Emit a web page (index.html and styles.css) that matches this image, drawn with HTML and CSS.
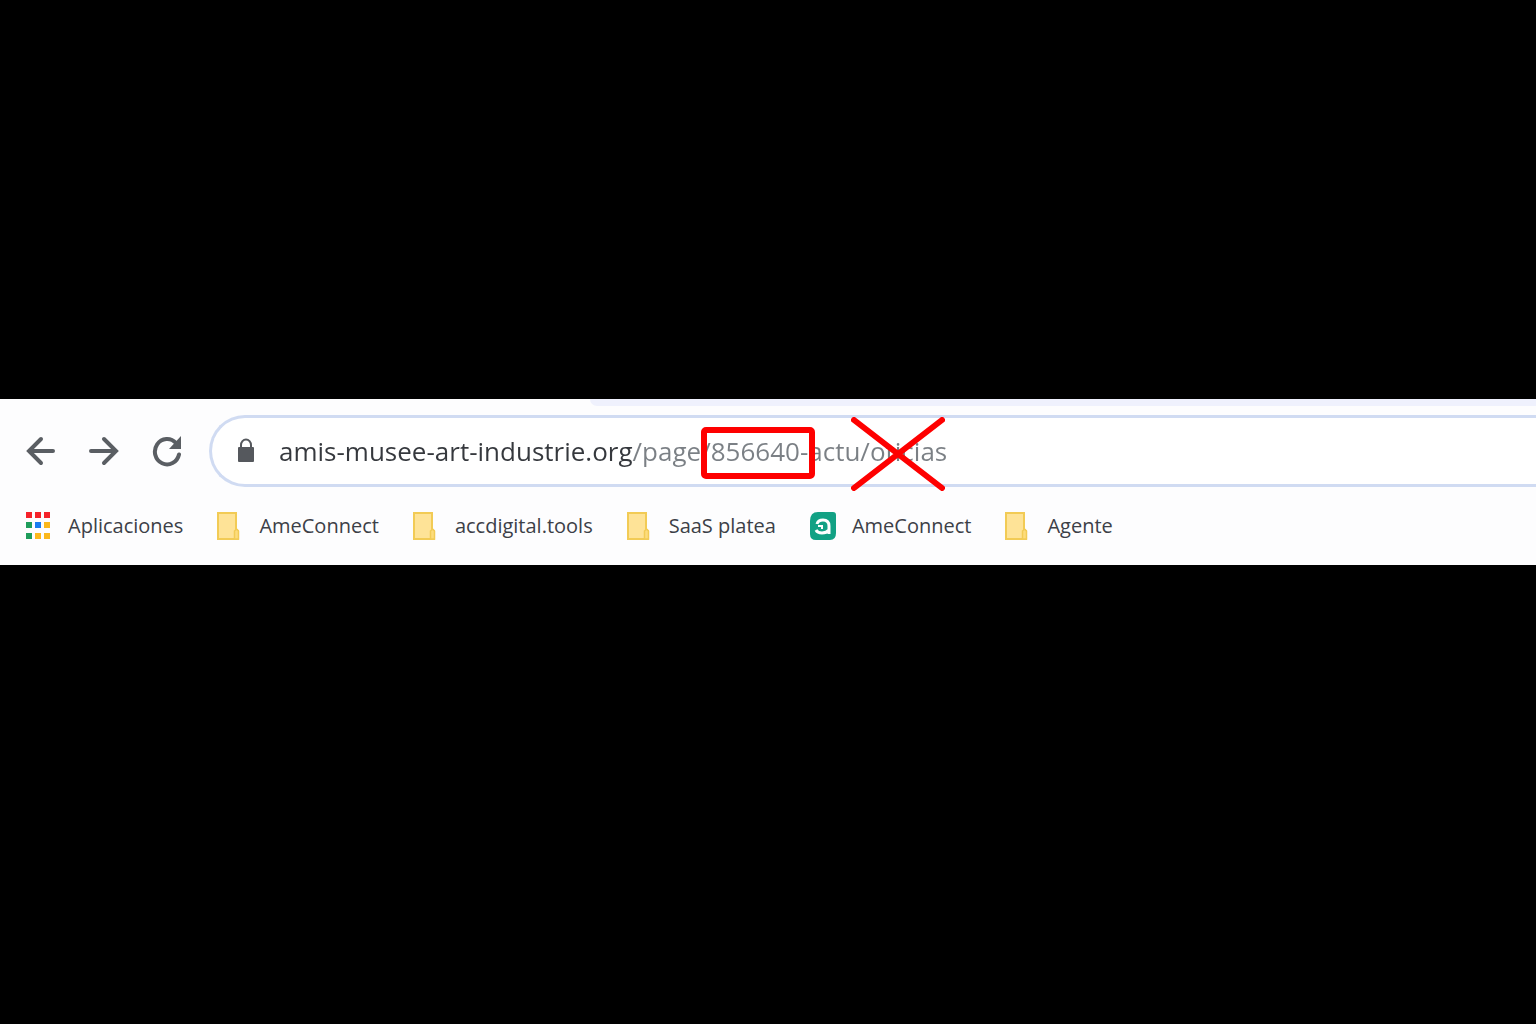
FILE: index.html
```
<!DOCTYPE html>
<html lang="es">
  <head>
    <meta charset="UTF-8" />
    <meta name="viewport" content="width=device-width, initial-scale=1.0" />
    <title>amis-musee-art-industrie.org</title>
    <link rel="stylesheet" href="styles.css" />
  </head>
  <body>
    <div class="browser">
      <div class="tab-strip"></div>

      <div class="toolbar">
        <button class="nav-button" type="button" aria-label="Atrás">
          <svg viewBox="0 0 32 32"><path d="M28 16H5M16 4L4 16l12 12" /></svg>
        </button>
        <button class="nav-button" type="button" aria-label="Adelante">
          <svg viewBox="0 0 32 32"><path d="M3 16h23M16 4l12 12-12 12" /></svg>
        </button>
        <button class="nav-button" type="button" aria-label="Recargar">
          <svg viewBox="0 0 32 32">
            <path d="M28 19.500A12.200 12.700 0 1 1 25 8" />
            <path class="solid" d="M30 1v13H18z" />
          </svg>
        </button>

        <div class="address-bar">
          <svg class="lock" viewBox="0 0 18 26">
            <path class="shackle" d="M4 11V7a5 5.500 0 0 1 10 0v4" />
            <rect x="1" y="9" width="16" height="15" rx="1" />
          </svg>
          <input
            class="url"
            type="text"
            aria-label="Dirección"
            spellcheck="false"
            value="amis-musee-art-industrie.org/page/856640-actu/oticias"
          />
          <div class="mark-box"></div>
          <svg class="mark-cross" viewBox="0 0 94 74">
            <path d="M3 3l88 68M91 3L3 71" />
          </svg>
        </div>
      </div>

      <nav class="bookmarks">
        <a class="bookmark" href="#">
          <svg class="icon" viewBox="0 0 26 28">
            <path fill="#f5222a" d="M0 0h6v6H0zM9 0h6v6H9zM18 0h6v6h-6z" />
            <path fill="#1f9d5b" d="M0 10h6v6H0zM0 21h6v6H0z" />
            <path fill="#1a7cf0" d="M9 10h6v6H9z" />
            <path fill="#fbb81c" d="M18 10h6v6h-6zM9 21h6v6H9zM18 21h6v6h-6z" />
          </svg>
          Aplicaciones
        </a>
        <a class="bookmark" href="#">
          <svg class="icon" viewBox="0 0 26 28"><use href="#folder" /></svg>
          AmeConnect
        </a>
        <a class="bookmark" href="#">
          <svg class="icon" viewBox="0 0 26 28"><use href="#folder" /></svg>
          accdigital.tools
        </a>
        <a class="bookmark" href="#">
          <svg class="icon" viewBox="0 0 26 28"><use href="#folder" /></svg>
          SaaS platea
        </a>
        <a class="bookmark" href="#">
          <svg class="icon" viewBox="0 0 26 28">
            <path fill="#12a184" d="M8 0h15q3 0 3 3v18q0 7-6 7H6q-6 0-6-6V9q0-9 8-9z" />
            <path
              fill="none"
              stroke="#fff"
              stroke-width="3"
              d="M7 12Q8 8 13 8q6 0 6 6v8M6 18q1.500 3 6 3 4.500 0 7-3"
            />
            <path fill="none" stroke="#fff" stroke-width="2" d="M8 14h4v3" />
          </svg>
          AmeConnect
        </a>
        <a class="bookmark" href="#">
          <svg class="icon" viewBox="0 0 26 28"><use href="#folder" /></svg>
          Agente
        </a>
      </nav>
    </div>

    <svg class="symbols" aria-hidden="true">
      <symbol id="folder" viewBox="0 0 26 28">
        <path fill="#fee397" stroke="#f2cb55" stroke-width="2" d="M1 1h18v16l2 2v8H1z" />
        <path fill="#fddc7c" stroke="#f2cb55" stroke-width="1.500" d="M17.500 27v-8l2-2 2 2v8z" />
      </symbol>
    </svg>
  </body>
</html>
```
FILE: styles.css
```
* {
  box-sizing: border-box;
}
body {
  margin: 0;
  min-height: 100vh;
  display: grid;
  grid-template-rows: 399fr auto 459fr;
  background-color: #000;
  font-family: "Open Sans", "Noto Sans", sans-serif;
}
.browser {
  grid-row: 2;
  min-width: 0;
  overflow: hidden;
  background-color: #fdfdfe;
}
.tab-strip {
  height: 7px;
  margin-left: 590px;
  background-color: #eff1fd;
  border-bottom-left-radius: 7px;
}
.toolbar {
  display: flex;
  align-items: center;
  padding-top: 9px;
  padding-left: 25px;
}
.nav-button {
  flex: none;
  width: 32px;
  height: 32px;
  margin-right: 31px;
  padding: 0;
  border: none;
  background: none;
  cursor: pointer;
}
.nav-button svg {
  display: block;
  fill: none;
  stroke: #5a5e63;
  stroke-width: 4;
  stroke-linecap: round;
}
.nav-button .solid {
  fill: #5a5e63;
  stroke: none;
}
.address-bar {
  position: relative;
  flex: 1;
  display: flex;
  align-items: center;
  height: 72px;
  margin-left: -5px;
  padding-left: 25px;
  border: 3px solid #d0dbf2;
  border-right: none;
  border-radius: 36px 0 0 36px;
  background-color: #fff;
}
.lock {
  flex: none;
  width: 18px;
  height: 26px;
  fill: #55585d;
}
.shackle {
  fill: none;
  stroke: #55585d;
  stroke-width: 2;
}
.url {
  flex: 1;
  min-width: 0;
  height: 40px;
  margin-left: 24px;
  padding: 0;
  border: none;
  outline: none;
  font-family: inherit;
  font-size: 26px;
  /* host part dark, path part grey */
  color: transparent;
  caret-color: #333;
  background: linear-gradient(to right, #35383d 354px, #7b8085 354px);
  background-clip: text;
}
.mark-box {
  position: absolute;
  top: 9px;
  left: 489px;
  width: 114px;
  height: 52px;
  border: 6px solid #fe0000;
  border-radius: 5px;
}
.mark-cross {
  position: absolute;
  top: -1px;
  left: 639px;
  width: 94px;
  height: 74px;
  fill: none;
  stroke: #fe0000;
  stroke-width: 6;
  stroke-linecap: round;
}
.bookmarks {
  display: flex;
  align-items: center;
  gap: 34px;
  height: 78px;
  padding-left: 26px;
}
.bookmark {
  display: flex;
  align-items: center;
  gap: 16px;
  color: #3c4047;
  font-size: 20px;
  line-height: 28px;
  white-space: nowrap;
  text-decoration: none;
}
.icon {
  width: 26px;
  height: 28px;
}
.symbols {
  position: absolute;
  width: 0;
  height: 0;
}
```
